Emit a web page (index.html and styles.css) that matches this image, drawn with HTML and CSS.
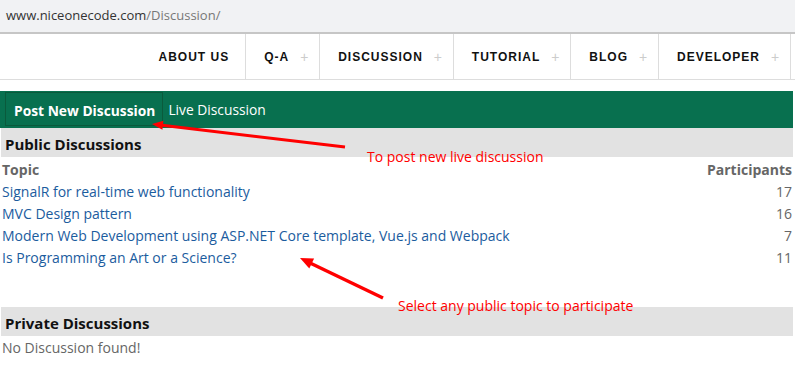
FILE: index.html
```html
<!DOCTYPE html>
<html lang="en">
<head>
  <meta charset="UTF-8">
  <meta name="viewport" content="width=device-width, initial-scale=1">
  <title>Discussion - NiceOneCode</title>
  <link rel="stylesheet" href="styles.css">
</head>
<body>
  <div class="address">
    <span class="host">www.niceonecode.com</span><span class="path">/Discussion/</span>
  </div>

  <header>
    <nav>
      <a href="#" class="solo">About us</a>
      <a href="#">Q-A<span class="plus">+</span></a>
      <a href="#">Discussion<span class="plus">+</span></a>
      <a href="#">Tutorial<span class="plus">+</span></a>
      <a href="#">Blog<span class="plus">+</span></a>
      <a href="#">Developer<span class="plus">+</span></a>
    </nav>
  </header>

  <div class="page">
    <div class="toolbar">
      <a href="#" class="post">Post New Discussion</a>
      <a href="#" class="live">Live Discussion</a>
    </div>

    <h2 class="section">Public Discussions</h2>
    <table class="topics">
      <tr>
        <th>Topic</th>
        <th class="num">Participants</th>
      </tr>
      <tr>
        <td><a href="#">SignalR for real-time web functionality</a></td>
        <td class="num">17</td>
      </tr>
      <tr>
        <td><a href="#">MVC Design pattern</a></td>
        <td class="num">16</td>
      </tr>
      <tr>
        <td><a href="#">Modern Web Development using ASP.NET Core template, Vue.js and Webpack</a></td>
        <td class="num">7</td>
      </tr>
      <tr>
        <td><a href="#">Is Programming an Art or a Science?</a></td>
        <td class="num">11</td>
      </tr>
    </table>

    <h2 class="section private">Private Discussions</h2>
    <p class="empty">No Discussion found!</p>
  </div>

  <!-- screenshot notes -->
  <div class="note note-post">To post new live discussion</div>
  <div class="note note-topic">Select any public topic to participate</div>
  <svg class="arrows" width="795" height="390" viewBox="0 0 795 390">
    <line x1="345" y1="147" x2="160" y2="125" stroke="#ff0000" stroke-width="3"/>
    <polygon points="152,124 163.4,120.8 162.4,129.8" fill="#ff0000"/>
    <line x1="383" y1="298" x2="308" y2="262" stroke="#ff0000" stroke-width="3.5"/>
    <polygon points="300,258 314.1,258.6 309.3,268.6" fill="#ff0000"/>
  </svg>
</body>
</html>
```

FILE: styles.css
```css
body {
  margin: 0;
  background-color: #fff;
  font-family: 'Open Sans', 'Noto Sans', sans-serif;
  font-size: 13px;
  color: #333;
}
.address {
  height: 32px;
  line-height: 30px;
  padding-left: 6px;
  background-color: #f1f2f4;
  border-bottom: 2px solid #c6c6c6;
}
.address .host {
  color: #333;
}
.address .path {
  color: #777;
}
header {
  border-bottom: 1px solid #ddd;
}
nav {
  display: flex;
  justify-content: flex-end;
  height: 45px;
  padding-right: 4px;
}
nav a {
  display: flex;
  align-items: center;
  padding: 0 11px 0 18px;
  border-right: 1px solid #ddd;
  color: #111;
  text-decoration: none;
  text-transform: uppercase;
  font-family: 'Liberation Sans', Arial, sans-serif;
  font-weight: bold;
  font-size: 12px;
  letter-spacing: 1px;
}
nav a.solo {
  padding-right: 16px;
}
nav a .plus {
  display: inline-block;
  width: 8px;
  margin-left: 11px;
  color: #ccc;
  font-size: 14px;
  font-weight: normal;
  letter-spacing: 0;
}
.page {
  width: 793px;
  margin-top: 11px;
}
.toolbar {
  display: flex;
  align-items: flex-start;
  height: 37px;
  padding-left: 5px;
  background-color: #08704f;
}
.toolbar a {
  color: #fff;
  text-decoration: none;
  font-size: 13.8px;
}
.toolbar .post {
  height: 31px;
  line-height: 33px;
  padding: 1px 7px 0 8px;
  margin-top: 1px;
  border: 1px solid #0a5a3c;
  font-weight: bold;
}
.toolbar .live {
  margin-left: 5px;
  margin-top: 3px;
  line-height: 32px;
}
.section {
  margin: 0 0 0 1px;
  height: 29px;
  line-height: 32px;
  padding-left: 4px;
  background-color: #e2e2e2;
  color: #111;
  font-size: 15px;
  font-weight: bold;
}
.topics {
  width: 100%;
  margin-top: 1px;
  border-collapse: collapse;
}
.topics th,
.topics td {
  height: 22px;
  padding: 0 0 0 2px;
  font-size: 14px;
  text-align: left;
}
.topics th {
  color: #666;
  font-weight: bold;
}
.topics .num {
  text-align: right;
  color: #666;
  padding-right: 1px;
}
.topics a {
  color: #1b5c9e;
  text-decoration: none;
}
.private {
  margin-top: 39px;
}
.empty {
  margin: 0;
  height: 22px;
  line-height: 24px;
  padding-left: 2px;
  font-size: 14px;
  color: #666;
}
.note {
  position: absolute;
  color: #ff0000;
  font-size: 14px;
}
.note-post {
  left: 367px;
  top: 147px;
}
.note-topic {
  left: 398px;
  top: 296px;
}
.arrows {
  position: absolute;
  left: 0;
  top: 0;
  pointer-events: none;
}
```
